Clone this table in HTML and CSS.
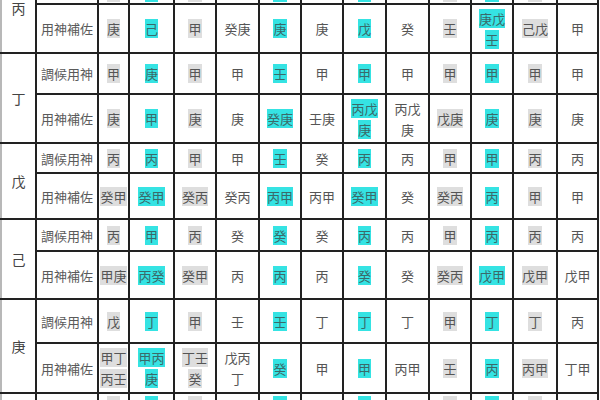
FILE: index.html
```html
<!DOCTYPE html>
<html lang="zh-Hant">
<head>
<meta charset="utf-8">
<title>調候用神表</title>
<link rel="stylesheet" href="styles.css">
</head>
<body>
<div class="frame">
<table class="chart">
  <colgroup>
    <col class="w-stem"><col class="w-label">
    <col class="w31"><col class="w45"><col class="w42"><col class="w43"><col class="w42"><col class="w42">
    <col class="w43"><col class="w43"><col class="w42"><col class="w42"><col class="w44"><col class="w41">
  </colgroup>
  <tbody>
    <tr class="h-r0">
      <td class="stem" rowspan="2">丙</td>
      <td class="label">調候用神</td>
      <td><span class="g">壬</span></td><td><span class="c">壬</span></td><td><span class="g">壬</span></td><td><span>壬庚</span></td>
      <td><span class="c">壬</span></td><td><span>壬庚</span></td><td><span class="c">壬</span></td><td><span>壬</span></td>
      <td><span class="g">甲</span></td><td><span class="c">甲</span></td><td><span class="g">壬</span></td><td><span>壬</span></td>
    </tr>
    <tr class="h-r1">
      <td class="label">用神補佐</td>
      <td><span class="g">庚</span></td><td><span class="c">己</span></td><td><span class="g">甲</span></td><td><span>癸庚</span></td>
      <td><span class="c">庚</span></td><td><span>庚</span></td><td><span class="c">戊</span></td><td><span>癸</span></td>
      <td><span class="g">壬</span></td><td><span class="c">庚戊<br>壬</span></td><td><span class="g">己戊</span></td><td><span>甲</span></td>
    </tr>
    <tr class="h-r2">
      <td class="stem" rowspan="2">丁</td>
      <td class="label">調候用神</td>
      <td><span class="g">甲</span></td><td><span class="c">庚</span></td><td><span class="g">甲</span></td><td><span>甲</span></td>
      <td><span class="c">壬</span></td><td><span>甲</span></td><td><span class="c">甲</span></td><td><span>甲</span></td>
      <td><span class="g">甲</span></td><td><span class="c">甲</span></td><td><span class="g">甲</span></td><td><span>甲</span></td>
    </tr>
    <tr class="h-r3">
      <td class="label">用神補佐</td>
      <td><span class="g">庚</span></td><td><span class="c">甲</span></td><td><span class="g">庚</span></td><td><span>庚</span></td>
      <td><span class="c">癸庚</span></td><td><span>壬庚</span></td><td><span class="c">丙戊<br>庚</span></td><td><span>丙戊<br>庚</span></td>
      <td><span class="g">戊庚</span></td><td><span class="c">庚</span></td><td><span class="g">庚</span></td><td><span>庚</span></td>
    </tr>
    <tr class="h-r4">
      <td class="stem" rowspan="2">戊</td>
      <td class="label">調候用神</td>
      <td><span class="g">丙</span></td><td><span class="c">丙</span></td><td><span class="g">甲</span></td><td><span>甲</span></td>
      <td><span class="c">壬</span></td><td><span>癸</span></td><td><span class="c">丙</span></td><td><span>丙</span></td>
      <td><span class="g">甲</span></td><td><span class="c">甲</span></td><td><span class="g">丙</span></td><td><span>丙</span></td>
    </tr>
    <tr class="h-r5">
      <td class="label">用神補佐</td>
      <td><span class="g">癸甲</span></td><td><span class="c">癸甲</span></td><td><span class="g">癸丙</span></td><td><span>癸丙</span></td>
      <td><span class="c">丙甲</span></td><td><span>丙甲</span></td><td><span class="c">癸甲</span></td><td><span>癸</span></td>
      <td><span class="g">癸丙</span></td><td><span class="c">丙</span></td><td><span class="g">甲</span></td><td><span>甲</span></td>
    </tr>
    <tr class="h-r6">
      <td class="stem" rowspan="2">己</td>
      <td class="label">調候用神</td>
      <td><span class="g">丙</span></td><td><span class="c">甲</span></td><td><span class="g">丙</span></td><td><span>癸</span></td>
      <td><span class="c">癸</span></td><td><span>癸</span></td><td><span class="c">丙</span></td><td><span>丙</span></td>
      <td><span class="g">甲</span></td><td><span class="c">丙</span></td><td><span class="g">丙</span></td><td><span>丙</span></td>
    </tr>
    <tr class="h-r7">
      <td class="label">用神補佐</td>
      <td><span class="g">甲庚</span></td><td><span class="c">丙癸</span></td><td><span class="g">癸甲</span></td><td><span>丙</span></td>
      <td><span class="c">丙</span></td><td><span>丙</span></td><td><span class="c">癸</span></td><td><span>癸</span></td>
      <td><span class="g">癸丙</span></td><td><span class="c">戊甲</span></td><td><span class="g">戊甲</span></td><td><span>戊甲</span></td>
    </tr>
    <tr class="h-r8">
      <td class="stem" rowspan="2">庚</td>
      <td class="label">調候用神</td>
      <td><span class="g">戊</span></td><td><span class="c">丁</span></td><td><span class="g">甲</span></td><td><span>壬</span></td>
      <td><span class="c">壬</span></td><td><span>丁</span></td><td><span class="c">丁</span></td><td><span>丁</span></td>
      <td><span class="g">甲</span></td><td><span class="c">丁</span></td><td><span class="g">丁</span></td><td><span>丙</span></td>
    </tr>
    <tr class="h-r9">
      <td class="label">用神補佐</td>
      <td><span class="g">甲丁<br>丙壬</span></td><td><span class="c">甲丙<br>庚</span></td><td><span class="g">丁壬<br>癸</span></td><td><span>戊丙<br>丁</span></td>
      <td><span class="c">癸</span></td><td><span>甲</span></td><td><span class="c">甲</span></td><td><span>丙甲</span></td>
      <td><span class="g">壬</span></td><td><span class="c">丙</span></td><td><span class="g">丙甲</span></td><td><span>丁甲</span></td>
    </tr>
    <tr class="h-r10">
      <td class="stem" rowspan="2">辛</td>
      <td class="label">調候用神</td>
      <td><span class="g">己</span></td><td><span class="c">壬</span></td><td><span class="g">壬</span></td><td><span>壬</span></td>
      <td><span class="c">壬</span></td><td><span>壬</span></td><td><span class="c">壬</span></td><td><span>壬</span></td>
      <td><span class="g">壬</span></td><td><span class="c">壬</span></td><td><span class="g">壬</span></td><td><span>丙</span></td>
    </tr>
    <tr class="h-r11">
      <td class="label">用神補佐</td>
      <td><span class="g">壬庚</span></td><td><span class="c">己</span></td><td><span class="g">甲</span></td><td><span>甲</span></td>
      <td><span class="c">己</span></td><td><span>庚甲</span></td><td><span class="c">甲</span></td><td><span>甲</span></td>
      <td><span class="g">甲</span></td><td><span class="c">丙</span></td><td><span class="g">丙</span></td><td><span>壬</span></td>
    </tr>
  </tbody>
</table>
</div>
</body>
</html>
```

FILE: styles.css
```css
html, body {
  margin: 0;
  padding: 0;
  background: #ffffff;
}
.frame {
  width: 600px;
  height: 400px;
  overflow: hidden;
}
.chart {
  border-collapse: collapse;
  table-layout: fixed;
  width: 597px;
  margin-top: -37px;
  font-family: "Noto Sans CJK TC", "Noto Sans CJK SC", sans-serif;
  font-size: 13px;
  color: #555;
}
.chart td {
  border: 2px solid #222;
  padding: 0;
  text-align: center;
  vertical-align: middle;
  line-height: 21px;
}
.chart td:first-child { border-left-color: #b8b8b8; }
.chart .h-r0 td:not(.stem) {
  vertical-align: bottom;
}
.chart .stem {
  font-size: 14px;
  color: #444;
}
.chart .label {
  color: #5a5a5a;
}
.c {
  background: #35e3e3;
  -webkit-box-decoration-break: clone;
  box-decoration-break: clone;
  color: #3a6a6a;
}
.g {
  background: #dedede;
  -webkit-box-decoration-break: clone;
  box-decoration-break: clone;
}
.w-stem { width: 35px; }
.w-label { width: 62px; }
.w31 { width: 31px; }
.w41 { width: 41px; }
.w42 { width: 42px; }
.w43 { width: 43px; }
.w44 { width: 44px; }
.w45 { width: 45px; }
.h-r0 { height: 40px; }
.h-r1 { height: 49px; }
.h-r2 { height: 41px; }
.h-r3 { height: 49px; }
.h-r4 { height: 30px; }
.h-r5 { height: 46px; }
.h-r6 { height: 32px; }
.h-r7 { height: 48px; }
.h-r8 { height: 44px; }
.h-r9 { height: 50px; }
.h-r10 { height: 24px; }
.h-r11 { height: 40px; }
```
